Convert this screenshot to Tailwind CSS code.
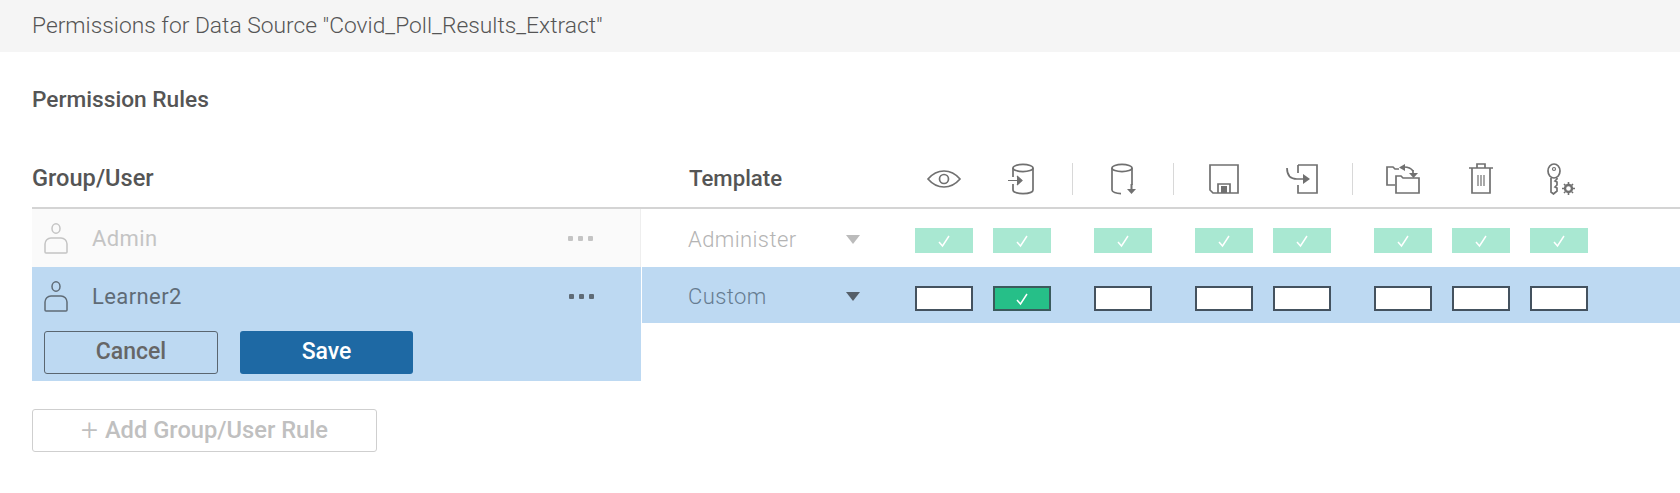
<!DOCTYPE html>
<html lang="en">
<head>
    <meta charset="UTF-8">
    <title>Permissions</title>
    <script src="https://cdn.jsdelivr.net/npm/@tailwindcss/browser@4"></script>
</head>
<body class="bg-white font-['Roboto',sans-serif] text-[#555] h-[493px] overflow-hidden">
    <!-- Title bar -->
    <div class="h-[52px] bg-[#f5f5f5] pl-8 pt-[1px] flex items-center text-[22.8px] font-light text-[#555]">Permissions for Data Source "Covid_Poll_Results_Extract"</div>

    <h2 class="pl-8 mt-[37px] h-[22px] leading-[22px] text-[22.7px] font-medium text-[#555]">Permission Rules</h2>

    <!-- Column headers -->
    <div class="ml-8 mt-[39px] h-[59px] flex border-b-2 border-[#d4d4d4]">
        <div class="w-[610px] pt-[16px] text-[23.6px] font-medium leading-[24px]">Group/User</div>
        <div class="w-[273px] pl-[47px] pt-[16px] text-[22.2px] font-medium leading-[24px]">Template</div>
        <div class="flex items-center text-[#707070]">
            <div class="w-[58px] flex justify-center">
                <svg width="36" height="18" viewBox="0 0 36 18" fill="none" stroke="currentColor" stroke-width="1.700"><path d="M2 9C8 2 13 1 18 1s10 1 16 8c-6 7-11 8-16 8S8 16 2 9z"/><circle cx="18" cy="9" r="4.500"/></svg>
            </div>
            <div class="w-[58px] ml-[20px] flex justify-center">
                <svg width="28" height="32" viewBox="0 0 28 32" fill="none" stroke="currentColor" stroke-width="1.700"><ellipse cx="15" cy="5" rx="10" ry="3.600"/><path d="M5 5v9M25 5v22c0 2-4 3.600-10 3.600S5 29 5 27v-6"/><path d="M0 17.500h13M9 13l5 4.500-5 4.500" fill="currentColor" stroke-width="1.200"/></svg>
            </div>
            <div class="w-px h-[32px] bg-[#d8d8d8] mx-[21px]"></div>
            <div class="w-[58px] flex justify-center">
                <svg width="28" height="32" viewBox="0 0 28 32" fill="none" stroke="currentColor" stroke-width="1.700"><ellipse cx="13" cy="5" rx="10" ry="3.600"/><path d="M3 5v22c0 2 4 3.600 9 3.600M23 5v17"/><path d="M22.500 21v6" stroke-width="2"/><path d="M18 26h9l-4.500 5z" fill="currentColor" stroke="none"/></svg>
            </div>
            <div class="w-px h-[32px] bg-[#d8d8d8] mx-[21px]"></div>
            <div class="w-[58px] flex justify-center">
                <svg width="30" height="30" viewBox="0 0 30 30" fill="none" stroke="currentColor" stroke-width="1.700"><path d="M1 1h28v28H4l-3-3z"/><path d="M9 29v-9h12v9"/><rect x="12" y="22" width="6" height="7" fill="currentColor" stroke="none"/></svg>
            </div>
            <div class="w-[58px] ml-[20px] flex justify-center">
                <svg width="32" height="30" viewBox="0 0 32 30" fill="none" stroke="currentColor" stroke-width="1.700"><path d="M12 1h19v28H12V21"/><path d="M12 9v-8"/><path d="M1 4c0 8 4 11 10 11h8"/><path d="M17 10l7 5-7 5z" fill="currentColor" stroke="none"/></svg>
            </div>
            <div class="w-px h-[32px] bg-[#d8d8d8] mx-[21px]"></div>
            <div class="w-[58px] flex justify-center">
                <svg width="34" height="30" viewBox="0 0 34 30" fill="none" stroke="currentColor" stroke-width="1.700"><path d="M9 21H1V3h6l2 2h4"/><path d="M10 29V12h5l2 2h16v15z"/><path d="M27 7c-2-3-4-4-9-4"/><path d="M19 0l-6 3.500 6 3.500z" fill="currentColor" stroke="none"/><path d="M27 6v5"/><path d="M23 9h9l-4.500 5z" fill="currentColor" stroke="none"/></svg>
            </div>
            <div class="w-[58px] ml-[20px] flex justify-center">
                <svg width="24" height="31" viewBox="0 0 24 31" fill="none" stroke="currentColor" stroke-width="1.700"><path d="M0 5h24M8 5V1h8v4M3 5v25h18V5"/><path d="M9 12v11M12 12v11M15 12v11" stroke-width="1.200"/></svg>
            </div>
            <div class="w-[58px] ml-[20px] pl-[3px] flex justify-center">
                <svg width="28" height="32" viewBox="0 0 28 32" fill="none" stroke="currentColor" stroke-width="1.700"><ellipse cx="7" cy="8" rx="6" ry="7"/><circle cx="7" cy="6" r="1.500" stroke-width="1.200"/><path d="M4 15v14l2.500 2L10 28v-3l-2-1 2-2v-3l-2-1 2-2v-1"/><circle cx="21.500" cy="25.500" r="3.500" stroke-width="2.400"/><path d="M21.500 19v13M15 25.500h13M17 21l9 9M26 21l-9 9" stroke-width="1.600" stroke-dasharray="2 9"/></svg>
            </div>
        </div>
    </div>

    <!-- Admin row -->
    <div class="flex h-[58px]">
        <div class="ml-8 w-[609px] bg-[#fafafa] flex items-center pl-3 pr-[47px] text-[#c4c4c4] border-r border-[#eee]">
            <svg width="24" height="31" viewBox="0 0 24 31" fill="none" stroke="currentColor" stroke-width="1.500" class="shrink-0"><ellipse cx="12" cy="5.500" rx="4" ry="4.700"/><path d="M1 29V21a6 6 0 0 1 6-6h10a6 6 0 0 1 6 6v8a1 1 0 0 1-1 1H2a1 1 0 0 1-1-1z"/></svg>
            <span class="ml-[24px] text-[22px] tracking-[0.4px]">Admin</span>
            <div class="ml-auto flex gap-[5px]">
                <div class="w-[5px] h-[5px] rounded-[1px] bg-[#c4c4c4]"></div>
                <div class="w-[5px] h-[5px] rounded-[1px] bg-[#c4c4c4]"></div>
                <div class="w-[5px] h-[5px] rounded-[1px] bg-[#c4c4c4]"></div>
            </div>
        </div>
        <div class="w-[273px] ml-[1px] pl-[46px] pt-[2px] flex items-center text-[22px] font-light tracking-[0.4px] text-[#b4b4b4]">
            <span class="w-[158px]">Administer</span>
            <svg width="14" height="9" viewBox="0 0 14 9" fill="#bbb"><path d="M0 0h14L7 9z"/></svg>
        </div>
        <div class="flex items-center pt-[5px]">
            <div class="w-[58px] h-[25px] bg-[#a9e8d2] flex items-center justify-center"><svg width="14" height="14" viewBox="0 0 14 14" fill="none" stroke="#fff" stroke-width="1.500"><path d="M2 8l3.500 4L12 2"/></svg></div>
            <div class="w-[58px] h-[25px] ml-[20px] bg-[#a9e8d2] flex items-center justify-center"><svg width="14" height="14" viewBox="0 0 14 14" fill="none" stroke="#fff" stroke-width="1.500"><path d="M2 8l3.500 4L12 2"/></svg></div>
            <div class="w-[58px] h-[25px] ml-[43px] bg-[#a9e8d2] flex items-center justify-center"><svg width="14" height="14" viewBox="0 0 14 14" fill="none" stroke="#fff" stroke-width="1.500"><path d="M2 8l3.500 4L12 2"/></svg></div>
            <div class="w-[58px] h-[25px] ml-[43px] bg-[#a9e8d2] flex items-center justify-center"><svg width="14" height="14" viewBox="0 0 14 14" fill="none" stroke="#fff" stroke-width="1.500"><path d="M2 8l3.500 4L12 2"/></svg></div>
            <div class="w-[58px] h-[25px] ml-[20px] bg-[#a9e8d2] flex items-center justify-center"><svg width="14" height="14" viewBox="0 0 14 14" fill="none" stroke="#fff" stroke-width="1.500"><path d="M2 8l3.500 4L12 2"/></svg></div>
            <div class="w-[58px] h-[25px] ml-[43px] bg-[#a9e8d2] flex items-center justify-center"><svg width="14" height="14" viewBox="0 0 14 14" fill="none" stroke="#fff" stroke-width="1.500"><path d="M2 8l3.500 4L12 2"/></svg></div>
            <div class="w-[58px] h-[25px] ml-[20px] bg-[#a9e8d2] flex items-center justify-center"><svg width="14" height="14" viewBox="0 0 14 14" fill="none" stroke="#fff" stroke-width="1.500"><path d="M2 8l3.500 4L12 2"/></svg></div>
            <div class="w-[58px] h-[25px] ml-[20px] bg-[#a9e8d2] flex items-center justify-center"><svg width="14" height="14" viewBox="0 0 14 14" fill="none" stroke="#fff" stroke-width="1.500"><path d="M2 8l3.500 4L12 2"/></svg></div>
        </div>
    </div>

    <!-- Learner2 row, in edit mode -->
    <div class="flex items-start">
        <div class="ml-8 w-[609px] h-[114px] bg-[#bdd9f2] pl-3 pr-[47px]">
            <div class="h-[56px] pt-[3px] flex items-center text-[#5f6b76]">
                <svg width="24" height="31" viewBox="0 0 24 31" fill="none" stroke="currentColor" stroke-width="1.500" class="shrink-0"><ellipse cx="12" cy="5.500" rx="4" ry="4.700"/><path d="M1 29V21a6 6 0 0 1 6-6h10a6 6 0 0 1 6 6v8a1 1 0 0 1-1 1H2a1 1 0 0 1-1-1z"/></svg>
                <span class="ml-[24px] text-[22px] tracking-[0.4px]">Learner2</span>
                <div class="ml-auto flex gap-[5px]">
                    <div class="w-[5px] h-[5px] rounded-[1px] bg-[#5f6b76]"></div>
                    <div class="w-[5px] h-[5px] rounded-[1px] bg-[#5f6b76]"></div>
                    <div class="w-[5px] h-[5px] rounded-[1px] bg-[#5f6b76]"></div>
                </div>
            </div>
            <div class="flex mt-[8px] gap-[22px]">
                <button class="w-[174px] h-[43px] rounded-[3px] border-[1.5px] border-[#5a6670] text-[23px] font-medium text-[#666]">Cancel</button>
                <button class="w-[173px] h-[43px] rounded-[3px] bg-[#1e69a4] text-[23px] font-medium text-white">Save</button>
            </div>
        </div>
        <div class="flex-1 ml-[1px] h-[56px] bg-[#bdd9f2] flex items-center pt-[7px]">
            <div class="w-[273px] pl-[46px] -mt-[4px] flex items-center text-[22px] font-light tracking-[0.4px] text-[#667c91]">
                <span class="w-[158px]">Custom</span>
                <svg width="14" height="9" viewBox="0 0 14 9" fill="#555f69"><path d="M0 0h14L7 9z"/></svg>
            </div>
            <div class="w-[58px] h-[25px] bg-white border-2 border-[#44525f]"></div>
            <div class="w-[58px] h-[25px] ml-[20px] bg-[#26bf88] border-2 border-[#3b5a5c] flex items-center justify-center"><svg width="14" height="14" viewBox="0 0 14 14" fill="none" stroke="#fff" stroke-width="1.500"><path d="M2 8l3.500 4L12 2"/></svg></div>
            <div class="w-[58px] h-[25px] ml-[43px] bg-white border-2 border-[#44525f]"></div>
            <div class="w-[58px] h-[25px] ml-[43px] bg-white border-2 border-[#44525f]"></div>
            <div class="w-[58px] h-[25px] ml-[20px] bg-white border-2 border-[#44525f]"></div>
            <div class="w-[58px] h-[25px] ml-[43px] bg-white border-2 border-[#44525f]"></div>
            <div class="w-[58px] h-[25px] ml-[20px] bg-white border-2 border-[#44525f]"></div>
            <div class="w-[58px] h-[25px] ml-[20px] bg-white border-2 border-[#44525f]"></div>
        </div>
    </div>

    <button class="ml-8 mt-[28px] w-[345px] h-[43px] rounded-[3px] border border-[#cfcfcf] text-[23.7px] font-medium text-[#c0c0c0] flex items-center justify-center"><span class="font-light text-[30px] leading-none mr-[7px] -mt-[2px]">+</span>Add Group/User Rule</button>
</body>
</html>
